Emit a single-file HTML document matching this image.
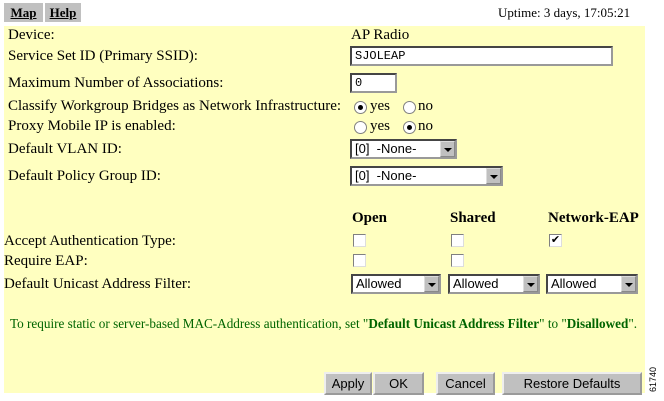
<!DOCTYPE html>
<html><head><meta charset="utf-8"><style>
body{margin:0;width:664px;height:401px;background:#fff;position:relative;overflow:hidden;font-family:"Liberation Serif",serif;font-size:15px;color:#000}
.a{position:absolute;white-space:nowrap}
.y{position:absolute;left:4px;top:26px;width:641px;height:367px;background:#ffffc0}
.tab{position:absolute;top:3px;height:19px;background:#c0c0c0;font-weight:bold;font-size:13px;text-decoration:underline;text-align:center;line-height:19px}
.in{position:absolute;background:#fff;border:2px inset #999;box-sizing:border-box;font-family:"Liberation Mono",monospace;font-size:12px;line-height:16px;padding-left:3px}
.sel{position:absolute;background:#fff;border:2px inset #999;box-sizing:border-box;font-family:"Liberation Sans",sans-serif;font-size:13px;line-height:16px;padding-left:3px}
.sel i{position:absolute;right:0;top:0;width:15px;height:16px;background:#c0c0c0;box-sizing:border-box;border:1px outset #ddd}
.sel i:after{content:"";position:absolute;left:3px;top:6px;border:4px solid transparent;border-top:4px solid #000;border-bottom:0}
.cb{position:absolute;width:11px;height:11px;border:1px solid #808080;border-right-color:#ddd;border-bottom-color:#ddd;background:#fff;font-size:11px;line-height:11px;text-align:center}
.r{position:absolute;width:11px;height:11px;border-radius:50%;border:1px solid #808080;background:#fff}
.r.on:after{content:"";position:absolute;left:3px;top:3px;width:5px;height:5px;border-radius:50%;background:#000}
.btn{position:absolute;top:372px;height:23px;background:#c0c0c0;border:2px outset #eee;box-sizing:border-box;font-family:"Liberation Sans",sans-serif;font-size:13px;text-align:center;line-height:19px}
</style></head><body>
<div class="y"></div>
<div class="tab" style="left:4px;width:39px">Map</div>
<div class="tab" style="left:45px;width:36px">Help</div>
<div class="a" style="left:498px;top:5px;font-size:13px">Uptime: 3 days, 17:05:21</div>

<div class="a" style="left:8px;top:27px">Device:</div>
<div class="a" style="left:351px;top:27px">AP Radio</div>
<div class="a" style="left:8px;top:48px">Service Set ID (Primary SSID):</div>
<div class="in" style="left:350px;top:46px;width:263px;height:20px">SJOLEAP</div>
<div class="a" style="left:8px;top:75px">Maximum Number of Associations:</div>
<div class="in" style="left:350px;top:73px;width:47px;height:20px">0</div>
<div class="a" style="left:8px;top:98px">Classify Workgroup Bridges as Network Infrastructure:</div>
<div class="r on" style="left:354px;top:101px"></div><div class="a" style="left:370px;top:98px">yes</div>
<div class="r" style="left:403px;top:101px"></div><div class="a" style="left:418px;top:98px">no</div>
<div class="a" style="left:8px;top:118px">Proxy Mobile IP is enabled:</div>
<div class="r" style="left:354px;top:121px"></div><div class="a" style="left:370px;top:118px">yes</div>
<div class="r on" style="left:403px;top:121px"></div><div class="a" style="left:418px;top:118px">no</div>
<div class="a" style="left:8px;top:141px">Default VLAN ID:</div>
<div class="sel" style="left:350px;top:139px;width:107px;height:20px">[0]&nbsp; -None-<i></i></div>
<div class="a" style="left:8px;top:168px">Default Policy Group ID:</div>
<div class="sel" style="left:350px;top:166px;width:153px;height:20px">[0]&nbsp; -None-<i></i></div>

<div class="a" style="left:352px;top:210px;font-weight:bold">Open</div>
<div class="a" style="left:450px;top:210px;font-weight:bold">Shared</div>
<div class="a" style="left:548px;top:210px;font-weight:bold">Network-EAP</div>
<div class="a" style="left:4px;top:233px">Accept Authentication Type:</div>
<div class="cb" style="left:353px;top:234px"></div>
<div class="cb" style="left:451px;top:234px"></div>
<div class="cb" style="left:549px;top:234px">✔</div>
<div class="a" style="left:4px;top:253px">Require EAP:</div>
<div class="cb" style="left:353px;top:254px"></div>
<div class="cb" style="left:451px;top:254px"></div>
<div class="a" style="left:4px;top:276px">Default Unicast Address Filter:</div>
<div class="sel" style="left:351px;top:274px;width:90px;height:20px">Allowed<i></i></div>
<div class="sel" style="left:448px;top:274px;width:92px;height:20px">Allowed<i></i></div>
<div class="sel" style="left:546px;top:274px;width:92px;height:20px">Allowed<i></i></div>

<div class="a" style="left:10px;top:316px;font-size:13.2px;color:#006400">To require static or server-based MAC-Address authentication, set "<b>Default Unicast Address Filter</b>" to "<b>Disallowed</b>".</div>

<div class="btn" style="left:324px;width:48px">Apply</div>
<div class="btn" style="left:373px;width:51px">OK</div>
<div class="btn" style="left:436px;width:59px">Cancel</div>
<div class="btn" style="left:502px;width:140px">Restore Defaults</div>
<div class="a" style="left:648px;top:392px;font-family:'Liberation Sans',sans-serif;font-size:9px;transform:rotate(-90deg);transform-origin:0 0">61740</div>
</body></html>
